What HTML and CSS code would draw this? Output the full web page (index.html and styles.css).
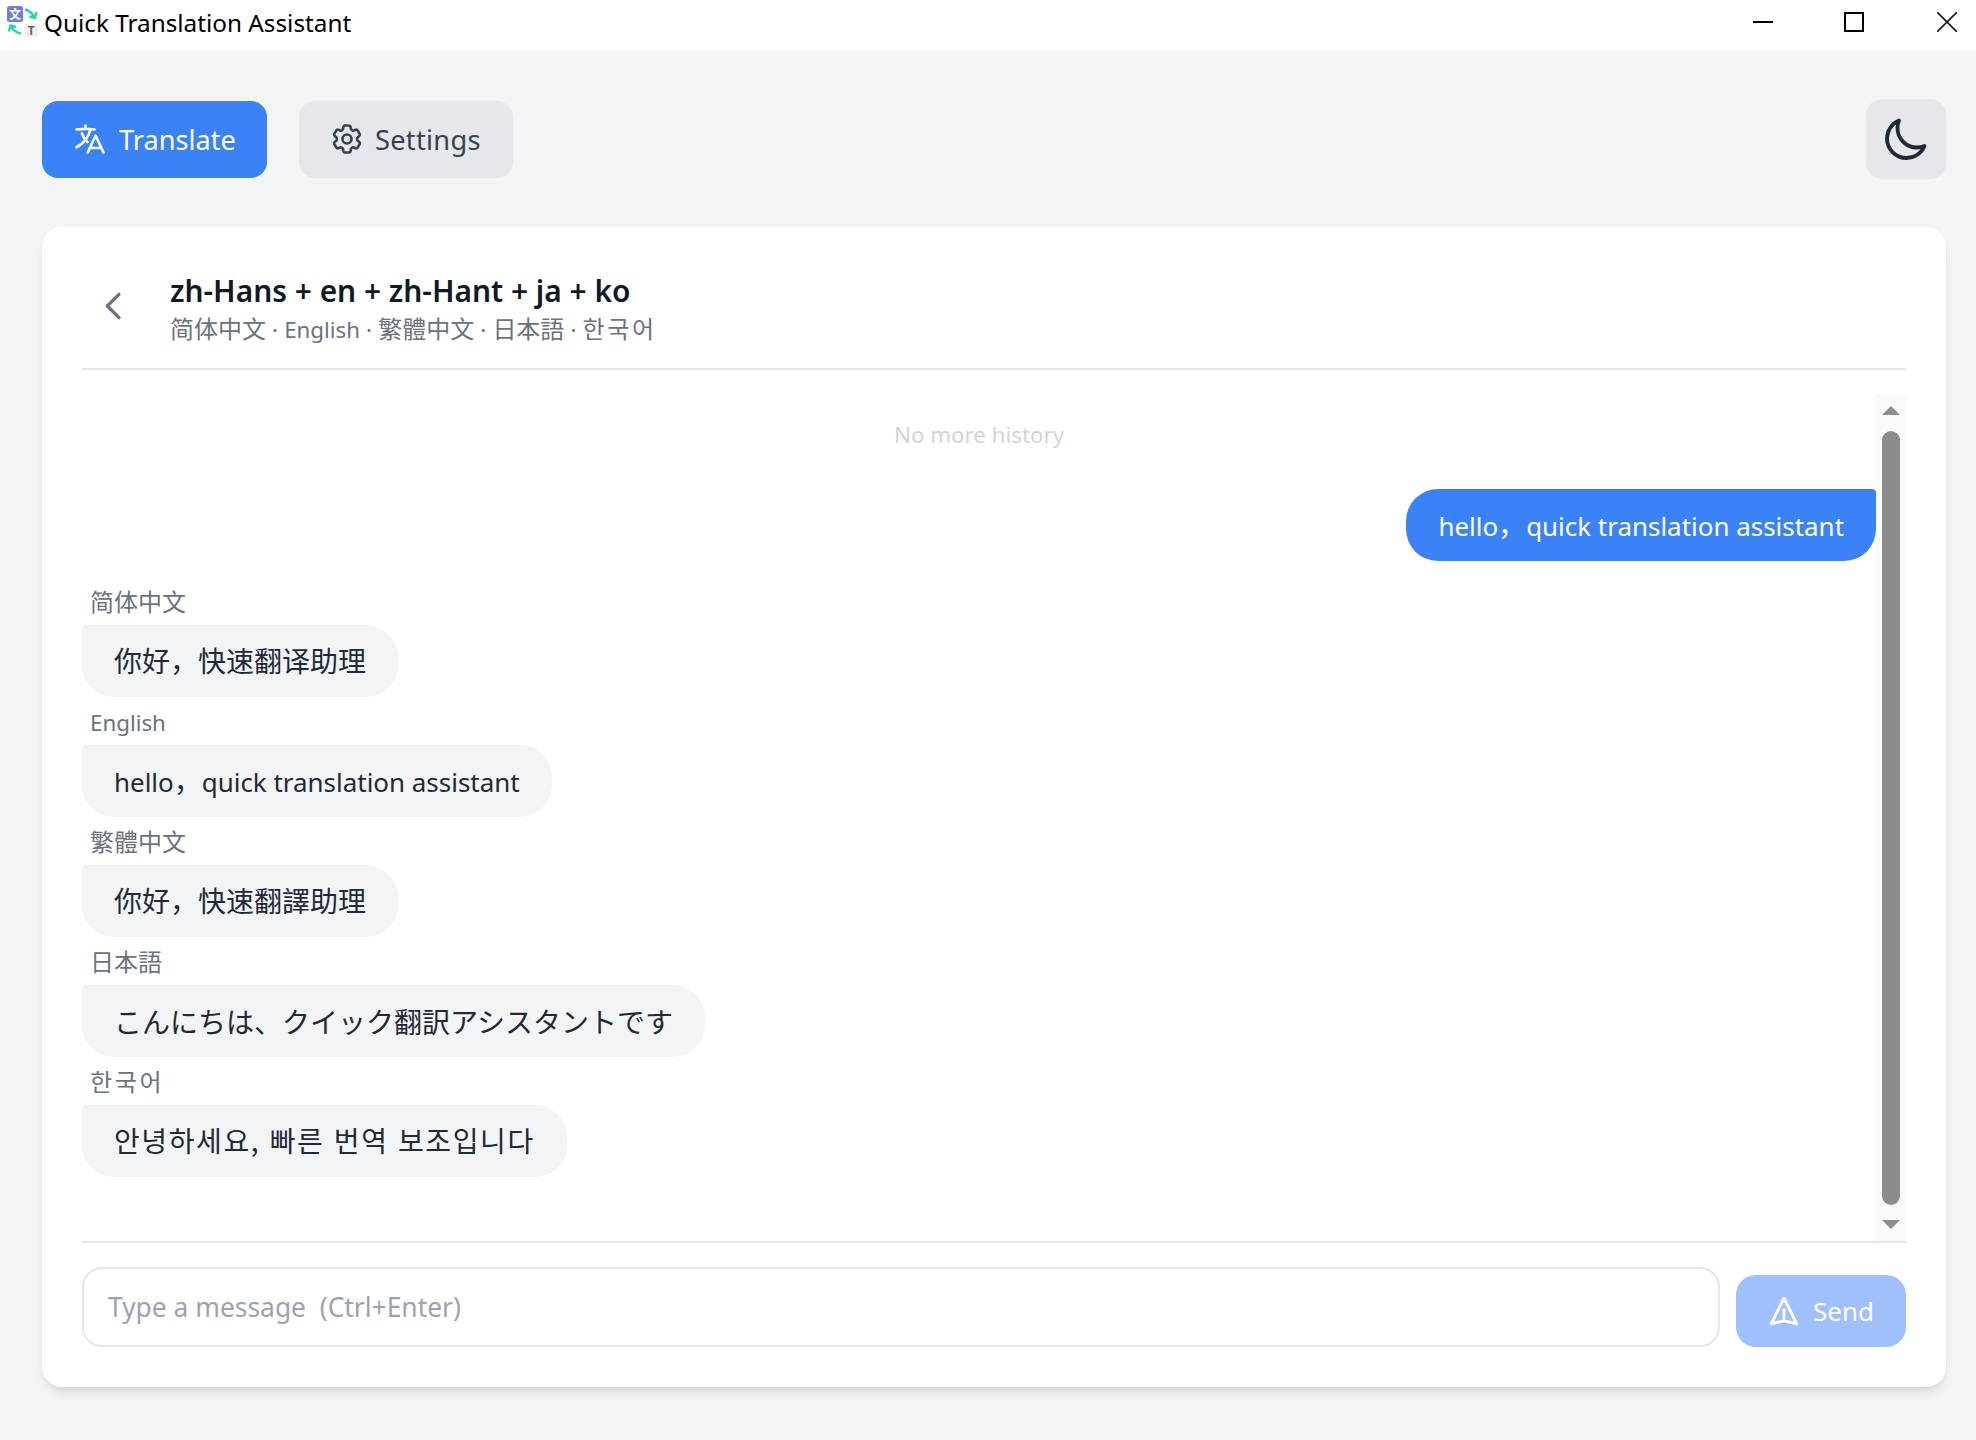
FILE: index.html
```html
<!DOCTYPE html>
<html lang="en">
<head>
  <meta charset="UTF-8">
  <meta name="viewport" content="width=device-width, initial-scale=1.0">
  <title>Quick Translation Assistant</title>
  <link rel="stylesheet" href="styles.css">
</head>
<body>

  <!-- Window title bar -->
  <header class="titlebar">
    <div class="app-title">
      <svg class="app-icon" viewBox="0 0 32 32">
        <rect x="0" y="0" width="16" height="16" rx="2.5" fill="#6d7fdc"/>
        <text x="8" y="12.5" class="app-icon-zh">文</text>
        <rect x="17.500" y="17.500" width="13.500" height="13.500" fill="#f1eff3"/>
        <text x="24.250" y="29" class="app-icon-t">T</text>
        <path d="M18 3.500C22 4.500 25 7 27.500 11M29.500 6L28 12l-5.500-1.500" class="app-icon-arrow"/>
        <path d="M14 27.500C10 27 6 24 4 20M2 25.500l1.500-6L9 21" class="app-icon-arrow"/>
      </svg>
      <span>Quick Translation Assistant</span>
    </div>
    <div class="win-controls">
      <svg class="win-icon" viewBox="0 0 20 20"><path d="M0 10h20"/></svg>
      <svg class="win-icon" viewBox="0 0 20 20"><path d="M1 1h18v18H1z"/></svg>
      <svg class="win-icon win-close" viewBox="0 0 20 20"><path d="M0 0l20 20M20 0L0 20"/></svg>
    </div>
  </header>

  <main class="page">
    <nav class="topnav">
      <div class="tabs">
        <button class="tab tab-active">
          <svg class="tab-icon" viewBox="0 0 24 24"><path d="M10.500 21l5.250-11.250L21 21m-9-3h7.500M3 5.621a48.474 48.474 0 016-.371m0 0c1.120 0 2.233.038 3.334.114M9 5.250V3m3.334 2.364C11.176 10.658 7.690 15.080 3 17.502m9.334-12.138c.896.061 1.785.147 2.666.257m-4.589 8.495a18.023 18.023 0 01-3.827-5.802"/></svg>
          Translate
        </button>
        <button class="tab tab-settings">
          <svg class="tab-icon" viewBox="0 0 24 24"><path d="M9.594 3.940c.09-.542.56-.94 1.110-.94h2.593c.55 0 1.020.398 1.110.94l.213 1.281c.063.374.313.686.645.870.074.04.147.083.22.127.324.196.72.257 1.075.124l1.217-.456a1.125 1.125 0 011.370.49l1.296 2.247a1.125 1.125 0 01-.26 1.431l-1.003.827c-.293.24-.438.613-.431.992a6.759 6.759 0 010 .255c-.007.378.138.75.43.99l1.005.828c.424.35.534.954.26 1.430l-1.298 2.247a1.125 1.125 0 01-1.369.491l-1.217-.456c-.355-.133-.75-.072-1.076.124a6.570 6.570 0 01-.22.128c-.331.183-.581.495-.644.869l-.213 1.280c-.09.543-.56.941-1.110.941h-2.594c-.55 0-1.020-.398-1.110-.94l-.213-1.281c-.062-.374-.312-.686-.644-.870a6.520 6.520 0 01-.22-.127c-.325-.196-.72-.257-1.076-.124l-1.217.456a1.125 1.125 0 01-1.369-.49l-1.297-2.247a1.125 1.125 0 01.26-1.431l1.004-.827c.292-.24.437-.613.43-.992a6.932 6.932 0 010-.255c.007-.378-.138-.75-.43-.99l-1.004-.828a1.125 1.125 0 01-.26-1.430l1.297-2.247a1.125 1.125 0 011.370-.491l1.216.456c.356.133.751.072 1.076-.124.072-.044.146-.087.22-.128.332-.183.582-.495.644-.869l.214-1.281z"/><path d="M15 12a3 3 0 11-6 0 3 3 0 016 0z"/></svg>
          Settings
        </button>
      </div>
      <button class="theme-btn">
        <svg class="theme-icon" viewBox="0 0 24 24"><path d="M21.752 15.002A9.718 9.718 0 0118 15.750c-5.385 0-9.750-4.365-9.750-9.750 0-1.330.266-2.597.748-3.752A9.753 9.753 0 003 11.250C3 16.635 7.365 21 12.750 21a9.753 9.753 0 009.002-5.998z"/></svg>
      </button>
    </nav>

    <section class="card">
      <div class="chat-header">
        <button class="back-btn">
          <svg class="back-icon" viewBox="0 0 24 24"><path d="M15 19l-7-7 7-7"/></svg>
        </button>
        <div class="chat-heading">
          <div class="chat-title">zh-Hans + en + zh-Hant + ja + ko</div>
          <div class="chat-sub"><span lang="zh-Hans">简体中文</span> · English · <span lang="zh-Hans">繁體中文</span> · <span lang="ja">日本語</span> · <span lang="ko">한국어</span></div>
        </div>
      </div>

      <div class="chat-body">
        <div class="messages">
          <div class="no-more">No more history</div>

          <div class="bubble bubble-user">hello<span class="wide-comma">，</span>quick translation assistant</div>

          <div class="group group-first">
            <div class="lang-label" lang="zh-Hans">简体中文</div>
            <div class="bubble" lang="zh-Hans">你好，快速翻译助理</div>
          </div>
          <div class="group">
            <div class="lang-label lang-label-en">English</div>
            <div class="bubble">hello<span class="wide-comma">，</span>quick translation assistant</div>
          </div>
          <div class="group">
            <div class="lang-label" lang="zh-Hans">繁體中文</div>
            <div class="bubble" lang="zh-Hans">你好，快速翻譯助理</div>
          </div>
          <div class="group">
            <div class="lang-label" lang="ja">日本語</div>
            <div class="bubble" lang="ja">こんにちは、クイック翻訳アシスタントです</div>
          </div>
          <div class="group">
            <div class="lang-label" lang="ko">한국어</div>
            <div class="bubble" lang="ko">안녕하세요, 빠른 번역 보조입니다</div>
          </div>
        </div>

        <!-- Scrollbar as drawn by the app -->
        <div class="scrollbar">
          <span class="arrow-up"></span>
          <span class="thumb"></span>
          <span class="arrow-down"></span>
        </div>
      </div>

      <div class="chat-footer">
        <textarea class="msg-input" rows="1" placeholder="Type a message  (Ctrl+Enter)"></textarea>
        <button class="send-btn">
          <svg class="send-icon" viewBox="0 0 24 24"><path d="M12 19l9 2-9-18-9 18 9-2zm0 0v-8"/></svg>
          Send
        </button>
      </div>
    </section>
  </main>

</body>
</html>
```

FILE: styles.css
```css
* {
  box-sizing: border-box;
}
html, body {
  height: 100%;
}
body {
  margin: 0;
  display: flex;
  flex-direction: column;
  overflow: hidden;
  background-color: #f3f4f6;
  color: #1f2937;
  font-family: "Noto Sans", "Noto Sans CJK SC", sans-serif;
}
[lang="zh-Hans"] {
  font-family: "Noto Sans CJK SC", sans-serif;
}
[lang="ja"] {
  font-family: "Noto Sans CJK JP", sans-serif;
}
[lang="ko"] {
  font-family: "Noto Sans CJK KR", sans-serif;
  letter-spacing: 2.7px;
}
button {
  border: none;
  font-family: inherit;
  cursor: pointer;
}
svg {
  fill: none;
  stroke: currentColor;
  flex-shrink: 0;
}

/* Title bar */
.titlebar {
  height: 51px;
  flex-shrink: 0;
  display: flex;
  align-items: center;
  justify-content: space-between;
  padding: 0 19px 7px 7px;
  background-color: #fff;
}
.app-title {
  display: flex;
  align-items: center;
  gap: 5px;
  color: #000;
  font-size: 24.3px;
}
.app-icon {
  width: 32px;
  height: 32px;
  stroke: none;
  overflow: visible;
}
.app-icon-zh {
  fill: #fff;
  font-family: "Noto Sans CJK SC", sans-serif;
  font-size: 12px;
  font-weight: 700;
  text-anchor: middle;
}
.app-icon-t {
  fill: #6a5f68;
  font-size: 12px;
  font-weight: 700;
  text-anchor: middle;
}
.app-icon-arrow {
  fill: none;
  stroke: #2fd0b0;
  stroke-width: 2.4;
}
.win-controls {
  display: flex;
  gap: 71px;
}
.win-icon {
  width: 20px;
  height: 20px;
  stroke: #000;
  stroke-width: 2;
}
.win-close {
  margin-left: 2px;
  stroke: #1a1a1a;
  stroke-width: 1.6;
}

/* Page */
.page {
  flex: 1;
  display: flex;
  flex-direction: column;
  gap: 48px;
  min-height: 0;
  padding: 48px 30px 53px 42px;
}
.topnav {
  display: flex;
  align-items: center;
  justify-content: space-between;
}
.tabs {
  display: flex;
  gap: 32px;
}
.tab {
  display: flex;
  align-items: center;
  gap: 11px;
  height: 77px;
  padding: 0 31px 0 30px;
  border-radius: 16px;
  background-color: #e5e7eb;
  color: #374151;
  font-size: 27.2px;
}
.tab-settings {
  gap: 10px;
  padding-right: 32px;
  letter-spacing: 0.3px;
}
.tab-active {
  background-color: #3b82f6;
  color: #fff;
}
.tab-icon {
  width: 36px;
  height: 36px;
  stroke-width: 1.750;
  stroke-linecap: round;
  stroke-linejoin: round;
}
.theme-btn {
  display: flex;
  align-items: center;
  justify-content: center;
  width: 80px;
  height: 80px;
  padding: 0;
  border-radius: 16px;
  background-color: #e5e7eb;
  color: #1f2937;
}
.theme-icon {
  width: 48px;
  height: 48px;
  margin: 2px 0 0 -2px;
  stroke-width: 1.900;
  stroke-linecap: round;
  stroke-linejoin: round;
}

/* Chat card */
.card {
  flex: 1;
  min-height: 0;
  display: flex;
  flex-direction: column;
  padding: 0 40px 40px;
  border-radius: 20px;
  background-color: #fff;
  box-shadow: 0 8px 12px -3px rgba(0, 0, 0, 0.1), 0 3px 5px -3px rgba(0, 0, 0, 0.1);
}
.chat-header {
  height: 143px;
  flex-shrink: 0;
  display: flex;
  align-items: center;
  gap: 36px;
  padding: 16px 0 0 12px;
  border-bottom: 2px solid #e5e7eb;
}
.back-btn {
  display: flex;
  padding: 0;
  background: none;
  color: #6b7280;
}
.back-icon {
  width: 40px;
  height: 40px;
  stroke-width: 2;
  stroke-linecap: round;
  stroke-linejoin: round;
}
.chat-heading {
  margin-top: 2px;
}
.chat-title {
  color: #111827;
  font-size: 29.9px;
  font-weight: 600;
  line-height: 44px;
}
.chat-sub {
  color: #6b7280;
  font-size: 22.3px;
  line-height: 30px;
  word-spacing: 0.3px;
}
.chat-sub span {
  font-size: 24px;
}
.chat-body {
  flex: 1;
  min-height: 0;
  display: flex;
}
.messages {
  flex: 1;
  min-width: 0;
  display: flex;
  flex-direction: column;
  align-items: flex-start;
  padding-top: 45px;
}
.no-more {
  align-self: stretch;
  color: #d1d5db;
  font-size: 22.3px;
  line-height: 40px;
  text-align: center;
}
.bubble {
  padding: 17px 32px 15px;
  border-radius: 4px 32px 32px 32px;
  background-color: #f3f4f6;
  color: #1f2937;
  font-size: 25.95px;
  line-height: 40px;
}
.bubble[lang] {
  padding: 15px 32px 17px;
  font-size: 28px;
}
.bubble[lang="ja"] {
  padding: 16px 32px;
}
.bubble[lang="ko"] {
  letter-spacing: 1.6px;
}
.wide-comma {
  font-size: 28px;
  line-height: 1;
}
.bubble-user {
  align-self: flex-end;
  margin-top: 34px;
  border-radius: 32px 4px 32px 32px;
  background-color: #3b82f6;
  color: #fff;
}
.group-first {
  margin-top: 16px;
}
.lang-label {
  padding-left: 8px;
  color: #6b7280;
  font-size: 24px;
  line-height: 48px;
}
.lang-label-en {
  height: 48px;
  font-size: 22.3px;
  line-height: 51px;
}
.scrollbar {
  width: 31px;
  margin: 24px -1px 0 0;
  display: flex;
  flex-direction: column;
  align-items: center;
  padding: 12px 1px 12px 0;
  background-color: #fafafa;
}
.thumb {
  flex: 1;
  width: 18px;
  margin: 16px 0 15px;
  border-radius: 9px;
  background-color: #8c8c8c;
}
.arrow-up, .arrow-down {
  width: 0;
  height: 0;
  border-left: 9px solid transparent;
  border-right: 9px solid transparent;
}
.arrow-up {
  border-bottom: 9px solid #8c8c8c;
}
.arrow-down {
  border-top: 9px solid #8c8c8c;
}

/* Input row */
.chat-footer {
  flex-shrink: 0;
  display: flex;
  align-items: flex-end;
  gap: 16px;
  padding-top: 24px;
  border-top: 2px solid #e5e7eb;
}
.msg-input {
  flex: 1;
  height: 80px;
  padding: 19px 24px 17px;
  border: 2px solid #e5e7eb;
  border-radius: 20px;
  outline: none;
  resize: none;
  font-family: inherit;
  font-size: 26.4px;
  line-height: 38px;
}
.msg-input::placeholder {
  color: #9ca3af;
}
.send-btn {
  display: flex;
  align-items: center;
  gap: 12px;
  width: 170px;
  height: 72px;
  padding: 0 0 0 31px;
  border-radius: 20px;
  background-color: #9fc0fa;
  color: #fff;
  font-size: 26px;
}
.send-icon {
  width: 34px;
  height: 34px;
  stroke-width: 2;
  stroke-linecap: round;
  stroke-linejoin: round;
}
```
